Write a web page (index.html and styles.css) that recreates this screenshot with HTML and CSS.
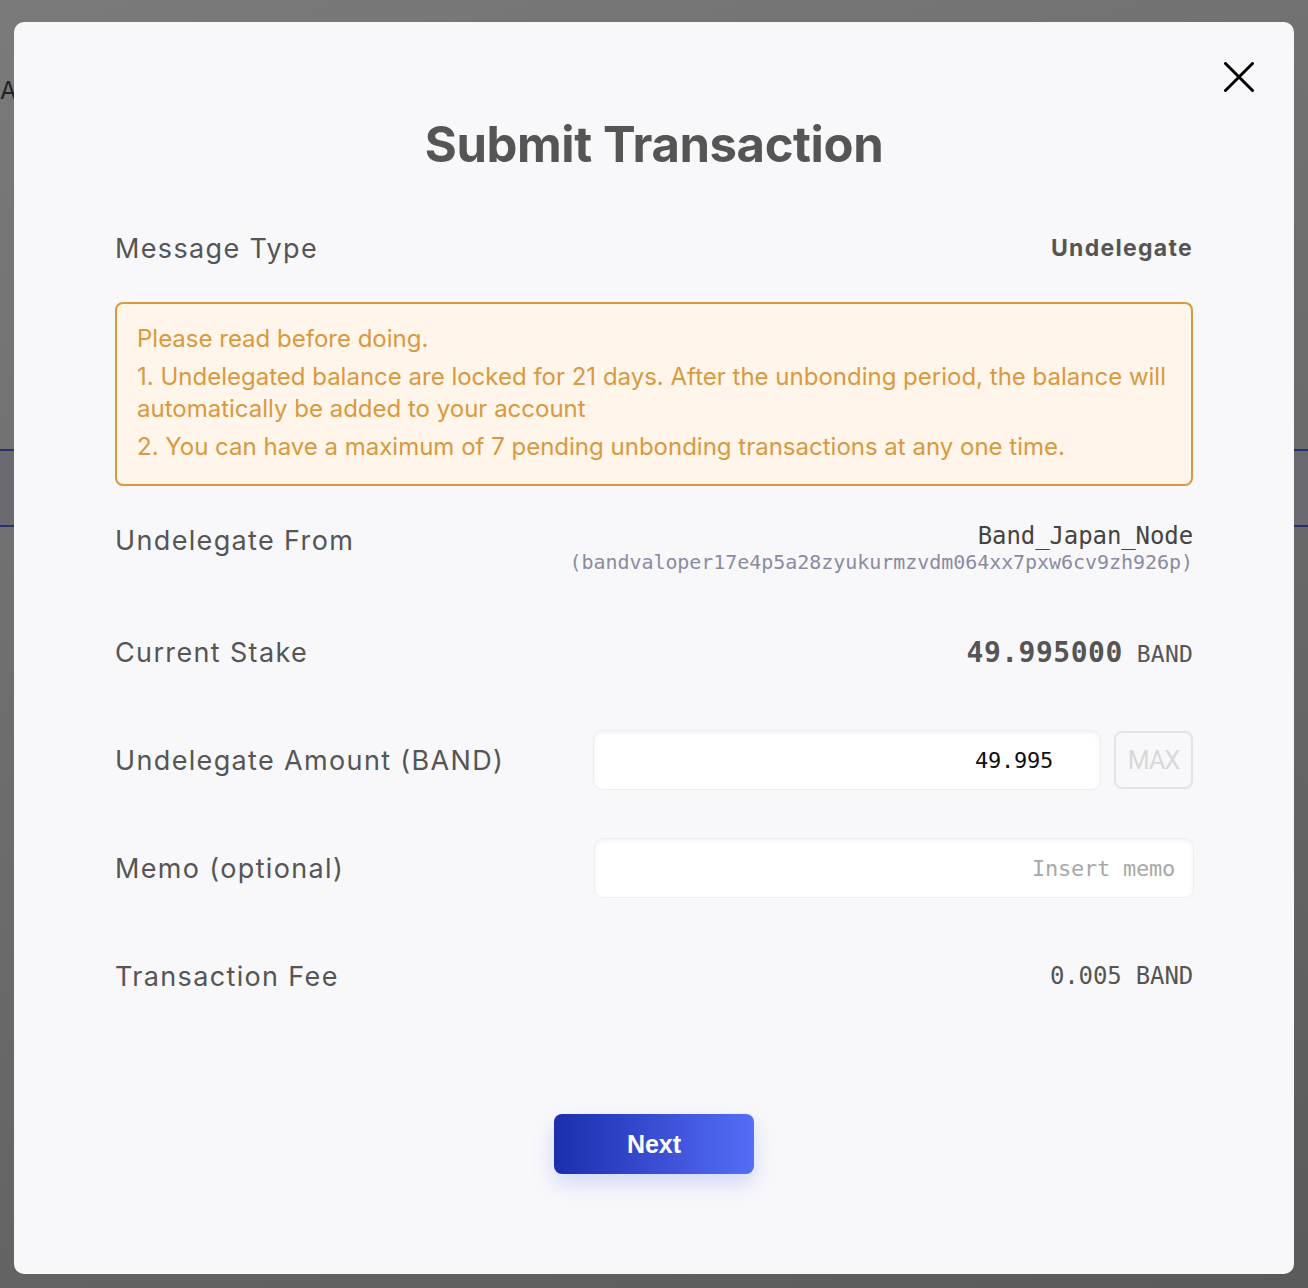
FILE: index.html
```html
<!DOCTYPE html>
<html lang="en">
<head>
<meta charset="utf-8">
<title>Submit Transaction</title>
<link rel="stylesheet" href="styles.css">
</head>
<body>
<div class="backdrop">
  <div class="bg-strip bg-strip-left"></div>
  <div class="bg-strip bg-strip-right"></div>
  <span class="bg-a">A</span>
</div>
<div class="modal">
  <button class="close" aria-label="Close">
    <svg width="30" height="30" viewBox="0 0 30 30"><path d="M1.5 1.5 L28.5 28.5 M28.5 1.5 L1.5 28.5" stroke="#000" stroke-width="3" stroke-linecap="round" fill="none"/></svg>
  </button>
  <h1 class="title">Submit Transaction</h1>
  <div class="content">
    <div class="row row-type">
      <span class="label">Message Type</span>
      <span class="type-value">Undelegate</span>
    </div>
    <div class="warning">
      <p>Please read before doing.</p>
      <p>1. Undelegated balance are locked for 21 days. After the unbonding period, the balance will automatically be added to your account</p>
      <p>2. You can have a maximum of 7 pending unbonding transactions at any one time.</p>
    </div>
    <div class="row row-from">
      <span class="label">Undelegate From</span>
      <div class="validator">
        <span class="val-name">Band_Japan_Node</span>
        <span class="val-addr">(bandvaloper17e4p5a28zyukurmzvdm064xx7pxw6cv9zh926p)</span>
      </div>
    </div>
    <div class="row row-std row-stake">
      <span class="label">Current Stake</span>
      <span class="stake"><b>49.995000</b> BAND</span>
    </div>
    <div class="row row-std">
      <span class="label">Undelegate Amount (BAND)</span>
      <div class="amount-group">
        <div class="input amount-input">49.995</div>
        <button class="max">MAX</button>
      </div>
    </div>
    <div class="row row-std">
      <span class="label">Memo (optional)</span>
      <div class="input memo-input"><span class="placeholder">Insert memo</span></div>
    </div>
    <div class="row row-std">
      <span class="label">Transaction Fee</span>
      <span class="fee">0.005 BAND</span>
    </div>
  </div>
  <div class="actions">
    <button class="next">Next</button>
  </div>
</div>
</body>
</html>
```

FILE: styles.css
```css
* { box-sizing: border-box; }
html, body { margin: 0; padding: 0; }
body {
  width: 1308px;
  height: 1288px;
  overflow: hidden;
  position: relative;
  background: linear-gradient(160deg, #7a7a7a 0%, #6b6b6b 50%, #5a5a5a 100%);
  font-family: Inter, "Noto Sans", sans-serif;
  padding: 22px 14px 14px 14px;
}
.backdrop { position: absolute; inset: 0; }
.bg-strip {
  position: absolute;
  top: 449px;
  height: 78px;
  width: 14px;
  border-top: 2px solid #2a2f6e;
  border-bottom: 2px solid #2a2f6e;
  background: #6a6a70;
}
.bg-strip-left { left: 0; }
.bg-strip-right { right: 0; }
.bg-a { position: absolute; left: 0; top: 76px; font-size: 24px; color: #222; }

.modal {
  position: relative;
  width: 1280px;
  height: 1252px;
  background: #f8f8fb;
  border-radius: 10px;
  padding: 0 101px 0 101px;
  display: flex;
  flex-direction: column;
}
.close {
  position: absolute;
  right: 40px;
  top: 40px;
  width: 30px;
  height: 30px;
  padding: 0;
  border: 0;
  background: none;
}
.close svg { display: block; }
.title {
  margin: 93px 0 0 0;
  text-align: center;
  font-size: 49px;
  line-height: 60px;
  font-weight: 700;
  color: #555555;
  letter-spacing: -0.4px;
}
.content { display: flex; flex-direction: column; }
.row {
  display: flex;
  justify-content: space-between;
  align-items: center;
}
.label {
  font-size: 27px;
  color: #555555;
  letter-spacing: 1.35px;
}
.row-type { margin-top: 49px; height: 48px; }
.type-value {
  font-size: 23px;
  font-weight: 700;
  color: #555555;
  letter-spacing: 1.3px;
}
.warning {
  margin-top: 30px;
  border: 2px solid #d9993f;
  background: #fff5ea;
  border-radius: 8px;
  padding: 19px 20px 21px 20px;
  color: #d9993f;
  font-size: 24px;
  line-height: 32px;
}
.warning p { margin: 0; }
.warning p + p { margin-top: 6px; }

.row-from { margin-top: 34px; align-items: flex-start; }
.row-from .label { margin-top: 4px; }
.validator { display: flex; flex-direction: column; align-items: flex-end; }
.val-name {
  font-family: "DejaVu Sans Mono", "Liberation Mono", monospace;
  font-size: 24px;
  line-height: 32px;
  color: #444;
  letter-spacing: -0.1px;
}
.val-addr {
  font-family: "DejaVu Sans Mono", "Liberation Mono", monospace;
  font-size: 20px;
  line-height: 20px;
  color: #8b8ba0;
  letter-spacing: -0.05px;
}
.row-std { height: 58px; margin-top: 50px; }
.row-from + .row-stake { margin-top: 51px; }
.stake {
  font-family: "DejaVu Sans Mono", "Liberation Mono", monospace;
  font-size: 23px;
  color: #555;
  letter-spacing: 0.2px;
}
.stake b { font-size: 28px; font-weight: 700; letter-spacing: 0.5px; }
.amount-group { display: flex; gap: 14px; align-items: center; }
.input {
  height: 58px;
  background: #ffffff;
  border-radius: 8px;
  box-shadow: inset 0 2px 4px rgba(170, 170, 210, 0.15), 0 0 0 1px rgba(230, 230, 240, 0.6);
  display: flex;
  align-items: center;
  justify-content: flex-end;
  font-family: "DejaVu Sans Mono", "Liberation Mono", monospace;
  font-size: 22px;
  letter-spacing: -0.25px;
}
.amount-input { width: 506px; padding-right: 47px; color: #111; }
.memo-input { width: 598px; padding-right: 18px; }
.placeholder { color: #a8a8a8; }
.max {
  width: 79px;
  height: 58px;
  border: 2px solid #e2e2ea;
  border-radius: 8px;
  background: #f8f8fb;
  color: #d8d8d8;
  font-family: Roboto, Inter, sans-serif;
  font-size: 25px;
  letter-spacing: -0.8px;
  padding: 0;
}
.fee {
  font-family: "DejaVu Sans Mono", "Liberation Mono", monospace;
  font-size: 24px;
  color: #555;
  letter-spacing: -0.15px;
}
.actions {
  display: flex;
  justify-content: center;
  margin-top: 109px;
}
.next {
  width: 200px;
  height: 60px;
  border: 0;
  border-radius: 8px;
  background: linear-gradient(90deg, #1a2eae 0%, #3a4dd3 50%, #546ef7 100%);
  color: #ffffff;
  font-family: "Liberation Sans", Arial, sans-serif;
  font-weight: 700;
  font-size: 25px;
  box-shadow: 0 10px 22px rgba(80, 100, 240, 0.22);
}
```
